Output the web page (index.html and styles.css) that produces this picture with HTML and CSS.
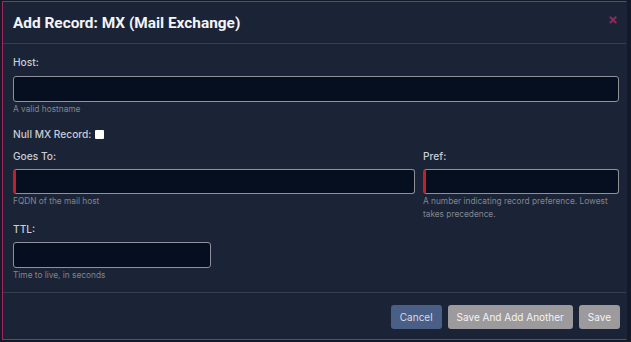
FILE: index.html
```html
<!DOCTYPE html>
<html lang="en">
<head>
  <meta charset="UTF-8">
  <title>Add Record</title>
  <link rel="stylesheet" href="styles.css">
</head>
<body>
  <div class="modal">
    <!-- header -->
    <div class="modal-header">
      <h2 class="modal-title">Add Record: MX (Mail Exchange)</h2>
      <span class="close-btn">&times;</span>
    </div>
    <form class="modal-body">
      <div class="field field-host">
        <label class="field-label">Host:</label>
        <input class="field-input" type="text">
        <div class="field-help">A valid hostname</div>
      </div>
      <div class="check-row">
        <label class="field-label">Null MX Record:</label>
        <span class="check-box"></span>
      </div>
      <div class="field-row">
        <div class="field">
          <label class="field-label">Goes To:</label>
          <input class="field-input required" type="text">
          <div class="field-help">FQDN of the mail host</div>
        </div>
        <div class="field">
          <label class="field-label">Pref:</label>
          <input class="field-input required" type="text">
          <div class="field-help">A number indicating record preference. Lowest takes precedence.</div>
        </div>
      </div>
      <div class="field field-ttl">
        <label class="field-label">TTL:</label>
        <input class="field-input" type="text">
        <div class="field-help">Time to live, in seconds</div>
      </div>
    </form>
    <!-- footer -->
    <div class="modal-footer">
      <button class="btn btn-cancel">Cancel</button>
      <button class="btn btn-grey">Save And Add Another</button>
      <button class="btn btn-grey">Save</button>
    </div>
  </div>
</body>
</html>
```

FILE: styles.css
```css
body {
  margin: 0;
  background: #141a28;
  font-family: Inter, 'Noto Sans', Arial, sans-serif;
  color: #c9cdd5;
}
.modal {
  margin: 1px 0 0 2px;
  width: 625px;
  height: 339px;
  box-sizing: border-box;
  background: #1b2336;
  border: 1px solid #a3285f;
  border-right-color: #1b2336;
  display: flex;
  flex-direction: column;
}
.modal-header {
  height: 42px;
  box-sizing: border-box;
  display: flex;
  align-items: center;
  justify-content: space-between;
  padding: 0 10px 0 10px;
  border-bottom: 1px solid #373f4c;
}
.modal-title {
  margin: 0;
  font-family: Roboto, Inter, sans-serif;
  font-size: 15.4px;
  font-weight: 700;
  color: #f2f4f7;
}
.close-btn {
  color: #8a2b5e;
  font-size: 15px;
  font-weight: 700;
  margin-top: -6px;
  margin-right: -2px;
}
.modal-body {
  flex: 1;
  padding: 11px 7px 0 10px;
}
.field-label {
  display: block;
  font-size: 10.2px;
  line-height: 14px;
  font-weight: 500;
  color: #c9cdd5;
  margin-bottom: 7px;
}
.field-input {
  display: block;
  width: 100%;
  height: 26px;
  box-sizing: border-box;
  background: #050f20;
  border: 1px solid #8e9198;
  border-radius: 3px;
  margin: 0;
  outline: none;
}
.field-input.required {
  border-left: 3px solid #c21f2a;
}
.field-help {
  font-size: 8.3px;
  line-height: 13px;
  color: #80868f;
  margin-top: 1px;
}
.field-host { margin-bottom: 11px; }
.check-row {
  display: flex;
  align-items: center;
  gap: 4px;
  margin-bottom: 8px;
}
.check-row .field-label { margin-bottom: 0; }
.check-box {
  width: 9px;
  height: 9px;
  background: #fff;
  border-radius: 1px;
}
.field-row {
  display: grid;
  grid-template-columns: 402px 1fr;
  gap: 8px;
  margin-bottom: 1px;
}
.field-row .field-input { height: 25px; }
.field-row .field-label { margin-bottom: 6px; }
.field-ttl .field-input { width: 198px; height: 26px; }
.field-ttl .field-label { margin-bottom: 6px; }
.modal-footer {
  display: flex;
  justify-content: flex-end;
  gap: 6px;
  padding: 12px 6px 10px 10px;
  border-top: 1px solid #373f4c;
}
.btn {
  height: 24px;
  border: none;
  border-radius: 3px;
  font-family: inherit;
  font-size: 10px;
  font-weight: 400;
  padding: 0 9px;
  color: #eef0f3;
}
.btn-cancel {
  background: #4a5f85;
  color: #d7dce4;
}
.btn-grey {
  background: #9c9a9c;
  color: #f4f4f4;
}
```
